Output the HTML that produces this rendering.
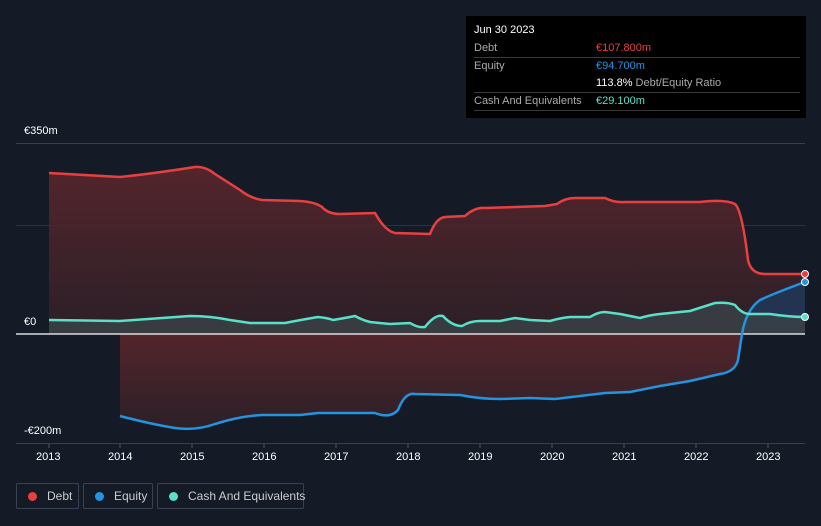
<!DOCTYPE html>
<html><head><meta charset="utf-8"><style>
html,body{margin:0;width:821px;height:526px;overflow:hidden}
body{background:#151b26;font-family:"Liberation Sans",sans-serif;position:relative}
.t{position:absolute;color:#fff;font-size:11px}
#tip{position:absolute;left:466px;top:16px;width:340px;height:102px;background:#000}
#tip .r{position:absolute;left:8px;width:326px;border-bottom:1px solid #3a3a3a;height:17px;font-size:11px;color:#aaa}
.lg{position:absolute;top:483px;height:26px;border:1px solid #3a4150;border-radius:2px;color:#ccc;font-size:12px;line-height:24px;box-sizing:border-box;white-space:nowrap}
.lg i{display:inline-block;width:9px;height:9px;border-radius:50%;margin:0 10px 0 11px;vertical-align:-1px}
</style></head><body>
<svg width="821" height="526" style="position:absolute;left:0;top:0">
<defs><linearGradient id="g" x1="0" y1="0" x2="0" y2="1"><stop offset="0" stop-color="#5a262c"/><stop offset="1" stop-color="#2e2027"/></linearGradient></defs>
<line x1="16" y1="143.5" x2="805" y2="143.5" stroke="#3a3f4a"/>
<line x1="16" y1="225.5" x2="805" y2="225.5" stroke="#2d323c"/>
<line x1="16" y1="443.5" x2="805" y2="443.5" stroke="#3a3f4a"/>
<path d="M49,334 L49,173 L120,177 Q150,174 195,167 Q205,166 215,174 L240,190 Q250,198 262,200 L300,201 Q315,202 322,207 Q328,214 340,214 L375,213 Q385,231 395,233 L430,234 Q436,218 445,217 L465,216 Q475,207 485,208 L545,206 L557,204 Q565,198 575,198 L605,198 Q615,203 625,202 L700,202 Q725,199 735,204 Q742,210 748,260 Q751,274 765,274 L805,274 L805,334 Z" fill="url(#g)" opacity="0.9"/>
<path d="M120,334 L120,416 Q150,424 175,428 Q195,431 215,424 Q240,416 262,415 L300,415 L318,413 L375,413 Q390,419 398,410 Q405,392 415,394 L460,395 Q480,399 500,399 L530,398 L555,399 L580,396 L605,393 L630,392 L660,386 L690,381 L720,374 Q735,372 738,360 L742,334 Z" fill="url(#g)" opacity="0.9"/>
<path d="M742,334 Q746,310 760,300 Q775,293 805,282 L805,334 Z" fill="#1f3a5a" opacity="0.8"/>
<path d="M49,334 L49,320 L120,321 Q150,319 190,316 Q210,316 230,320 L250,323 L285,323 Q300,320 318,317 Q328,318 333,320 Q345,318 355,316 Q362,320 370,322 L390,324 L410,323 Q418,328 425,327 Q435,314 443,316 Q452,326 462,326 Q470,321 480,321 L500,321 L515,318 L530,320 L550,321 Q560,318 570,317 L590,317 Q598,312 605,312 L620,314 L640,318 Q650,315 660,314 L690,311 L715,303 Q728,302 735,305 Q742,314 750,314 L770,314 Q790,317 805,317 L805,334 Z" fill="#3a4247" opacity="0.85"/>
<line x1="16" y1="334" x2="805" y2="334" stroke="#fff" stroke-width="1.2"/>
<path d="M49,173 L120,177 Q150,174 195,167 Q205,166 215,174 L240,190 Q250,198 262,200 L300,201 Q315,202 322,207 Q328,214 340,214 L375,213 Q385,231 395,233 L430,234 Q436,218 445,217 L465,216 Q475,207 485,208 L545,206 L557,204 Q565,198 575,198 L605,198 Q615,203 625,202 L700,202 Q725,199 735,204 Q742,210 748,260 Q751,274 765,274 L805,274" fill="none" stroke="#e84040" stroke-width="2.5"/>
<path d="M120,416 Q150,424 175,428 Q195,431 215,424 Q240,416 262,415 L300,415 L318,413 L375,413 Q390,419 398,410 Q405,392 415,394 L460,395 Q480,399 500,399 L530,398 L555,399 L580,396 L605,393 L630,392 L660,386 L690,381 L720,374 Q735,372 738,360 L742,334 Q746,310 760,300 Q775,293 805,282" fill="none" stroke="#2394df" stroke-width="2.5"/>
<path d="M49,320 L120,321 Q150,319 190,316 Q210,316 230,320 L250,323 L285,323 Q300,320 318,317 Q328,318 333,320 Q345,318 355,316 Q362,320 370,322 L390,324 L410,323 Q418,328 425,327 Q435,314 443,316 Q452,326 462,326 Q470,321 480,321 L500,321 L515,318 L530,320 L550,321 Q560,318 570,317 L590,317 Q598,312 605,312 L620,314 L640,318 Q650,315 660,314 L690,311 L715,303 Q728,302 735,305 Q742,314 750,314 L770,314 Q790,317 805,317" fill="none" stroke="#58e0c8" stroke-width="2.5"/>
<circle cx="805" cy="274" r="3.5" fill="#e84040" stroke="#fff"/>
<circle cx="805" cy="282" r="3.5" fill="#2394df" stroke="#fff"/>
<circle cx="805" cy="317" r="3.5" fill="#58e0c8" stroke="#fff"/>
<g stroke="#555b66"><line x1="49" y1="444" x2="49" y2="448"/><line x1="120" y1="444" x2="120" y2="448"/><line x1="192" y1="444" x2="192" y2="448"/><line x1="264" y1="444" x2="264" y2="448"/><line x1="336" y1="444" x2="336" y2="448"/><line x1="408" y1="444" x2="408" y2="448"/><line x1="480" y1="444" x2="480" y2="448"/><line x1="552" y1="444" x2="552" y2="448"/><line x1="624" y1="444" x2="624" y2="448"/><line x1="696" y1="444" x2="696" y2="448"/><line x1="768" y1="444" x2="768" y2="448"/></g>
</svg>
<div class="t" style="left:24px;top:125px">€350m</div>
<div class="t" style="left:24px;top:316px">€0</div>
<div class="t" style="left:24px;top:425px">-€200m</div>
<div class="t" style="left:36px;top:451px">2013</div><div class="t" style="left:108px;top:451px">2014</div><div class="t" style="left:180px;top:451px">2015</div><div class="t" style="left:252px;top:451px">2016</div><div class="t" style="left:324px;top:451px">2017</div><div class="t" style="left:396px;top:451px">2018</div><div class="t" style="left:468px;top:451px">2019</div><div class="t" style="left:540px;top:451px">2020</div><div class="t" style="left:612px;top:451px">2021</div><div class="t" style="left:684px;top:451px">2022</div><div class="t" style="left:756px;top:451px">2023</div>
<div id="tip">
<div style="position:absolute;left:8px;top:8px;color:#fff;font-size:11px">Jun 30 2023</div>
<div class="r" style="top:24px;line-height:17px">Debt<span style="position:absolute;left:122px;color:#e84040">€107.800m</span></div>
<div class="r" style="top:42px;line-height:17px;border:none">Equity<span style="position:absolute;left:122px;color:#2394df">€94.700m</span></div>
<div class="r" style="top:59px;line-height:17px"><span style="position:absolute;left:122px"><b style="color:#fff;font-weight:normal">113.8%</b> Debt/Equity Ratio</span></div>
<div class="r" style="top:77px;line-height:17px">Cash And Equivalents<span style="position:absolute;left:122px;color:#58e0c8">€29.100m</span></div>
</div>
<div class="lg" style="left:16px;width:63px"><i style="background:#e84040"></i>Debt</div>
<div class="lg" style="left:83px;width:70px"><i style="background:#2394df"></i>Equity</div>
<div class="lg" style="left:157px;width:147px"><i style="background:#58e0c8"></i>Cash And Equivalents</div>
</body></html>
